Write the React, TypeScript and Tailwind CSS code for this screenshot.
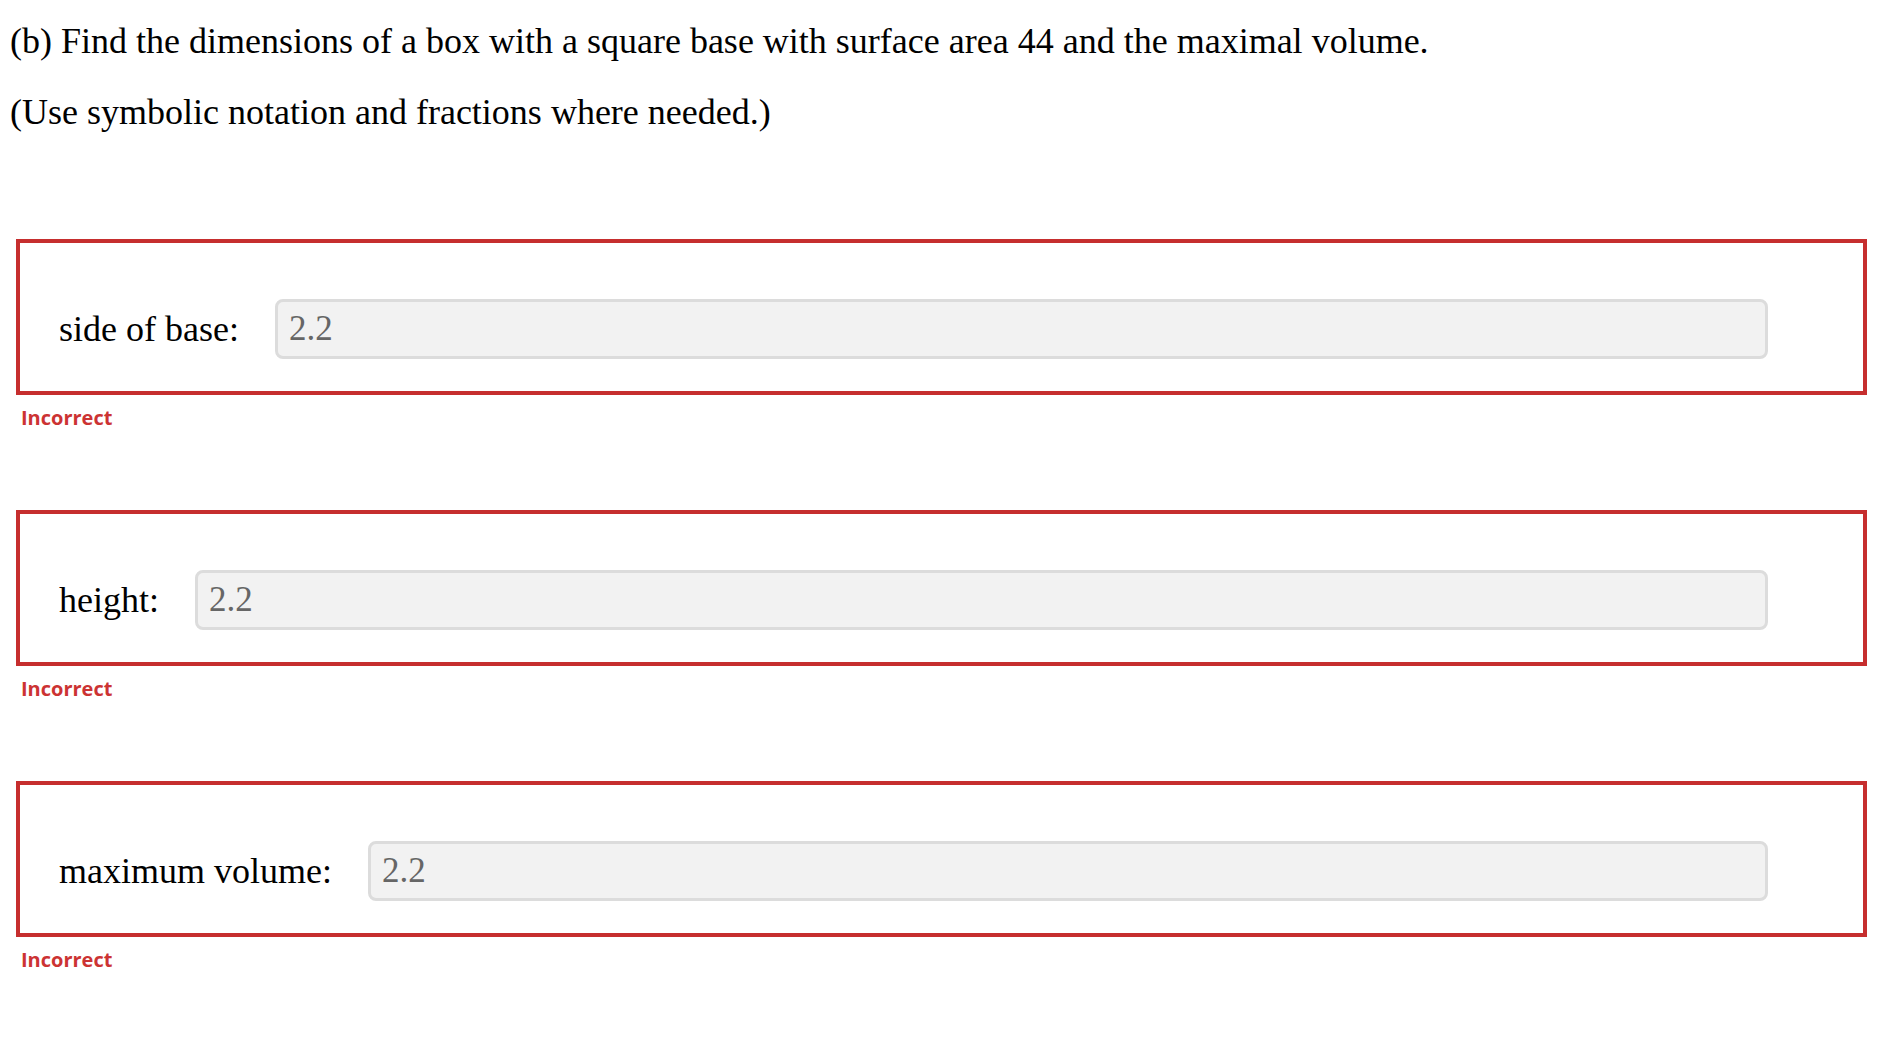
const serif = { fontFamily: '"Liberation Serif", "Times New Roman", serif' }

function AnswerRow({ label }: { label: string }) {
  return (
    <div className="mr-[13px] ml-[16px] mb-[78px] last:mb-0">
      <div className="flex items-center border-4 border-[#c62e2e] pt-[56px] pb-[32px] pl-[39px] pr-[95px]">
        <span className="text-[36px] leading-[42px] text-black whitespace-nowrap" style={serif}>
          {label}
        </span>
        <div className="ml-[36px] flex-1 h-[60px] rounded-[8px] border-[3px] border-[#dcdcdc] bg-[#f2f2f2] flex items-center px-[11px]">
          <span className="text-[35px] leading-[40px] text-[#666666]" style={serif}>
            2.2
          </span>
        </div>
      </div>
      <div
        className="mt-[9px] ml-[5px] text-[20px] leading-[28px] font-bold text-[#cc3333]"
        style={{ fontFamily: '"Open Sans", "Noto Sans", sans-serif' }}
      >
        Incorrect
      </div>
    </div>
  )
}

export default function App() {
  return (
    <div className="bg-white min-h-screen pt-[20px] pb-[40px]">
      <div className="pl-[10px] text-[36px] leading-[42px] text-black" style={serif}>
        <p>(b) Find the dimensions of a box with a square base with surface area 44 and the maximal volume.</p>
        <p className="mt-[29px]">(Use symbolic notation and fractions where needed.)</p>
      </div>
      <div className="mt-[106px]">
        <AnswerRow label="side of base:" />
        <AnswerRow label="height:" />
        <AnswerRow label="maximum volume:" />
      </div>
    </div>
  )
}
